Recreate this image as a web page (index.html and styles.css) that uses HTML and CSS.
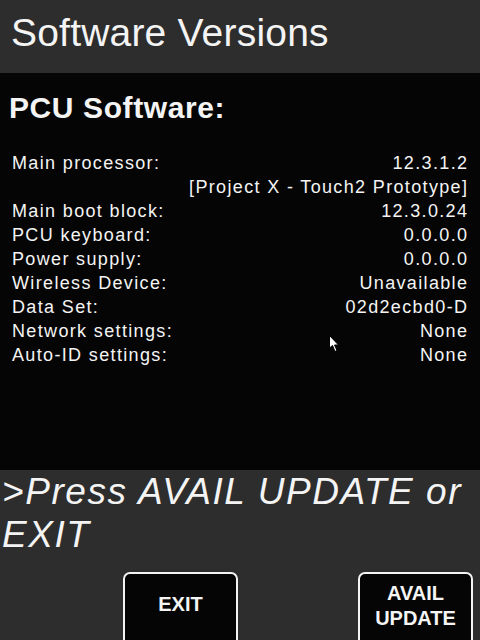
FILE: index.html
```html
<!DOCTYPE html>
<html>
<head>
<meta charset="utf-8">
<link rel="stylesheet" href="styles.css">
</head>
<body>
<div class="screen">
  <header class="header"><h1 class="title">Software Versions</h1></header>
  <main class="content">
    <h2 class="section">PCU Software:</h2>
    <div class="rows">
      <div class="row"><span class="label">Main processor:</span><span class="value">12.3.1.2<br>[Project X - Touch2 Prototype]</span></div>
      <div class="row"><span class="label">Main boot block:</span><span class="value">12.3.0.24</span></div>
      <div class="row"><span class="label">PCU keyboard:</span><span class="value">0.0.0.0</span></div>
      <div class="row"><span class="label">Power supply:</span><span class="value">0.0.0.0</span></div>
      <div class="row"><span class="label">Wireless Device:</span><span class="value">Unavailable</span></div>
      <div class="row"><span class="label">Data Set:</span><span class="value">02d2ecbd0-D</span></div>
      <div class="row"><span class="label">Network settings:</span><span class="value">None</span></div>
      <div class="row"><span class="label">Auto-ID settings:</span><span class="value">None</span></div>
    </div>
    <svg class="cursor" width="12" height="18" viewBox="0 0 12 18"><path d="M0.5 0.5 L0.5 13 L3.5 10.5 L6 16.5 L8 15.5 L5.5 10 L9.5 10 Z" fill="#fff" stroke="#000" stroke-width="1"/></svg>
  </main>
  <footer class="footer">
    <p class="prompt">&gt;Press AVAIL UPDATE or EXIT</p>
    <div class="buttons">
      <button class="btn btn-exit">EXIT</button>
      <button class="btn btn-update">AVAIL<br>UPDATE</button>
    </div>
  </footer>
</div>
</body>
</html>
```
FILE: styles.css
```css
html, body { margin: 0; padding: 0; }
body { background: #2d2d2d; font-family: "Liberation Sans", Arial, sans-serif; color: #f4f4f4; }
.screen { width: 480px; height: 640px; overflow: hidden; display: flex; flex-direction: column; }
.header { height: 73px; background: #2d2d2d; box-sizing: border-box; padding: 10px 0 0 11px; }
.title { margin: 0; font-weight: normal; font-size: 39px; line-height: 46px; letter-spacing: 0.2px; }
.content { position: relative; height: 397px; background: #050505; box-sizing: border-box; padding: 17px 13px 0 9px; }
.section { margin: 0; font-size: 30px; font-weight: bold; line-height: 36px; letter-spacing: 0.6px; }
.rows { margin-top: 25px; padding-left: 3px; display: flex; flex-direction: column; }
.row { display: flex; justify-content: space-between; font-size: 18px; line-height: 24px; letter-spacing: 1.35px; }
.value { text-align: right; margin-right: -1.35px; }
.cursor { position: absolute; left: 329px; top: 262px; }
.footer { flex: 1; background: #2d2d2d; display: flex; flex-direction: column; }
.prompt { margin: 0; padding: 0 0 0 2px; font-style: italic; font-size: 37px; line-height: 43px; width: 476px; letter-spacing: 1.55px; }
.buttons { position: relative; flex: 1; }
.btn { position: absolute; top: 16px; width: 115px; height: 80px; background: #050505; color: #f4f4f4; border: 2px solid #f4f4f4; border-radius: 7px; font-family: "Liberation Sans", Arial, sans-serif; font-weight: bold; font-size: 20px; line-height: 25px; padding: 0; box-sizing: border-box; display: flex; flex-direction: column; align-items: center; justify-content: flex-start; }
.btn-exit { left: 123px; padding-top: 18px; }
.btn-update { left: 358px; padding-top: 7px; }
```
